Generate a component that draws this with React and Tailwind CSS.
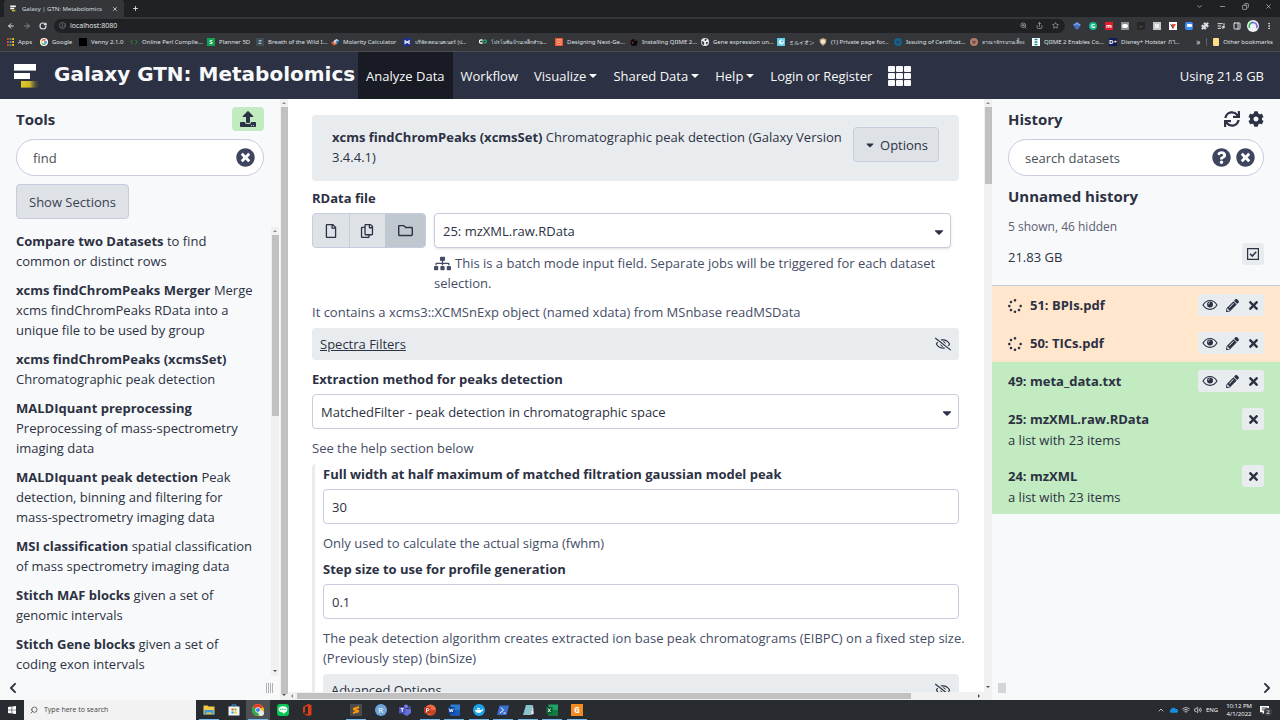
import { useState } from "react";
import { FaUpload, FaTimesCircle, FaQuestionCircle, FaCog, FaSitemap, FaPencilAlt, FaTimes, FaSpinner, FaRegFile, FaRegCopy, FaRegFolder, FaRegEyeSlash, FaCaretDown, FaChevronLeft, FaChevronRight, FaSync } from "react-icons/fa";
import { ArrowLeft, ArrowRight, RotateCw, Info, X, Plus, ZoomIn, Share, Star, ChevronDown, ChevronUp, Minus, Copy, Puzzle, ListMusic, MoreVertical, Search, PanelRight, Volume2, Wifi, Code } from "lucide-react";

const bookmarks = [
  { t: "Apps", w: "w-[33px]", k: "apps" },
  { t: "Google", w: "w-[39px]", k: "google" },
  { t: "Venny 2.1.0", w: "w-[51px]", k: "black" },
  { t: "Online Perl Compile...", w: "w-[77px]", k: "code" },
  { t: "Planner 5D", w: "w-[49px]", k: "s", c: "bg-[#12a150] text-white", l: "S" },
  { t: "Breath of the Wild I...", w: "w-[75px]", k: "s", c: "bg-[#3f4c55] text-[#9fc0cf]", l: "Z" },
  { t: "Molarity Calculator", w: "w-[72px]", k: "bird" },
  { t: "บริษัท คอนเนคเนอร์ (ป...", w: "w-[76px]", k: "s", c: "bg-[#1c2f8f] text-white", l: "⋈", small: true },
  { t: "โปรโมชั่น บ้านเหล็กสำน...", w: "w-[76px]", k: "loop", small: true },
  { t: "Designing Next-Ge...", w: "w-[75px]", k: "box" },
  { t: "Installing QIIME 2...", w: "w-[71px]", k: "dark" },
  { t: "Gene expression un...", w: "w-[76px]", k: "globe" },
  { t: "ミルイオン", w: "w-[42px]", k: "drop", small: true },
  { t: "(1) Private page for...", w: "w-[75px]", k: "face" },
  { t: "Issuing of Certificat...", w: "w-[76px]", k: "dot", c: "bg-[#12618f]" },
  { t: "อาณาจักรนานเลี้ยง", w: "w-[62px]", k: "dot", c: "bg-[#b77a67]", small: true },
  { t: "QIIME 2 Enables Co...", w: "w-[77px]", k: "bars" },
  { t: "Disney+ Hotstar ภา...", w: "w-[80px]", k: "s", c: "bg-[#101a56] text-white", l: "D+" },
];

function GoogleG() {
  return (
    <svg viewBox="0 0 16 16" className="size-2 shrink-0">
      <circle cx="8" cy="8" r="8" fill="#fff" />
      <g fill="none" strokeWidth="2.6">
        <path d="M4.4 5.2A4.6 4.6 0 0 1 11.2 4.8" stroke="#ea4335" />
        <path d="M4.4 5.2a4.6 4.6 0 0 0 0 5.6" stroke="#fbbc05" />
        <path d="M4.4 10.8a4.6 4.6 0 0 0 6.6.6" stroke="#34a853" />
        <path d="M11 11.4A4.6 4.6 0 0 0 12.6 8H8" stroke="#4285f4" />
      </g>
    </svg>
  );
}

function Favicon({ b }) {
  switch (b.k) {
    case "apps":
      return (
        <svg viewBox="0 0 7 8" className="h-2 w-[7px] shrink-0">
          {["#ea4335", "#34a853", "#fbbc05"].map((c, i) =>
            [0, 3, 6].map((y) => <rect key={c + y} x={i * 2.6} y={y} width="1.8" height="2" fill={y === 3 && i === 1 ? "#4285f4" : c} />)
          )}
        </svg>
      );
    case "google":
      return <GoogleG />;
    case "black":
      return <span className="size-2 shrink-0 bg-black" />;
    case "code":
      return <Code className="size-2 shrink-0 text-[#2c8a3c]" strokeWidth={3} />;
    case "bird":
      return (
        <svg viewBox="0 0 16 16" className="size-2 shrink-0">
          <path d="M0 8l7-1 4 6-6 2z" fill="#e8642c" />
          <path d="M5 6l6-4 5 3-5 7-4-2z" fill="#d8e6f3" />
          <path d="M9 7l6-3-2 6-3 1z" fill="#2b78c5" />
        </svg>
      );
    case "loop":
      return (
        <svg viewBox="0 0 16 10" className="h-[5px] w-2 shrink-0" fill="none" strokeWidth="2.6">
          <path d="M7 3A3.4 3.4 0 1 0 7 7" stroke="#fff" />
          <path d="M7 7l3-4a3 3 0 1 1 0 4" stroke="#26a269" />
        </svg>
      );
    case "box":
      return (
        <svg viewBox="0 0 8 8" className="size-2 shrink-0">
          <rect width="8" height="8" fill="#f1562b" />
          <path d="M2 1.500h4v5H2zM3 3h2M3 4.500h2" fill="none" stroke="#f7c9ba" strokeWidth=".7" />
        </svg>
      );
    case "dark":
      return (
        <svg viewBox="0 0 16 16" className="size-2 shrink-0">
          <circle cx="8" cy="9" r="7" fill="#0b0b0b" />
          <path d="M3 7l5 2-3 3zM9 2l4 2-4 2z" fill="#a92a31" />
        </svg>
      );
    case "globe":
      return (
        <svg viewBox="0 0 16 16" className="size-2 shrink-0">
          <circle cx="8" cy="8" r="8" fill="#e8eaed" />
          <path d="M1.500 6l4 1.500 1 3-1 4A8 8 0 0 1 1.500 6zM8 1l4 1.500L9.500 6 7 5zM10 8l4.500.5L12 13l-2-1.500z" fill="#3c4043" />
        </svg>
      );
    case "drop":
      return (
        <svg viewBox="0 0 8 8" className="size-2 shrink-0">
          <rect width="8" height="8" fill="#5ecbe8" />
          <circle cx="4.300" cy="4" r="2.500" fill="#e9f9fd" />
          <circle cx="5" cy="3.500" r="1" fill="#46b7dd" />
        </svg>
      );
    case "face":
      return (
        <svg viewBox="0 0 8 8" className="size-2 shrink-0">
          <path d="M.5 1.500L4 0l3.500 1.500L7 5 4 8 1 5z" fill="#c9a27e" />
          <circle cx="4" cy="3.600" r="2.200" fill="#f3e7d6" />
        </svg>
      );
    case "bars":
      return (
        <svg viewBox="0 0 8 8" className="size-2 shrink-0">
          <rect width="8" height="8" fill="#fff" />
          <path d="M2.500 1.500h3M2.500 4h3M2.500 6.500h3" stroke="#1490a5" strokeWidth="1.600" />
        </svg>
      );
    case "dot":
      return (
        <span className={"flex size-2 shrink-0 items-center justify-center rounded-full " + b.c}>
          <svg viewBox="0 0 8 8" className="size-[6px]" fill="none" stroke="#2f3a44"><path d="M1.500 2.500L4 6l2.500-3.500M4 2v4" /></svg>
        </span>
      );
    default:
      return <span aria-hidden="true" className={"flex size-2 shrink-0 items-center justify-center text-[6px] leading-none font-bold " + b.c}>{b.l}</span>;
  }
}

function GalaxyMark({ className }) {
  return (
    <svg viewBox="0 0 28 24" className={className}>
      <defs>
        <linearGradient id="gold" x1="0" x2="1">
          <stop offset="0" stopColor="#e3cc21" />
          <stop offset=".45" stopColor="#c9b52a" />
          <stop offset="1" stopColor="#2c3143" stopOpacity="0" />
        </linearGradient>
      </defs>
      <rect x="1" y="0" width="22" height="6.6" fill="#fff" />
      <rect x="1" y="9" width="16" height="6" fill="#fff" />
      <rect x="8" y="17" width="20" height="6.6" fill="url(#gold)" />
    </svg>
  );
}

function Browser() {
  return (
    <div className="shrink-0 text-[6px] leading-[8px] text-[#dfe1e5]">
      <div className="flex h-[17px] items-end bg-[#202124]">
        <div className="ml-1 flex h-[17px] w-[120px] items-center gap-[5px] rounded-t-[3px] bg-[#35363a] pr-1.5 pl-1.5">
          <GalaxyMark className="size-[7px]" />
          <span className="flex-1">Galaxy | GTN: Metabolomics</span>
          <button aria-label="Close tab"><X className="size-[6px]" strokeWidth={3} /></button>
        </div>
        <button aria-label="New tab" className="mb-[5px] ml-2"><Plus className="size-[7px]" strokeWidth={3} /></button>
        <div className="mb-[7px] ml-auto flex items-center gap-4 pr-2">
          <button aria-label="Search tabs"><ChevronDown className="size-[7px]" /></button>
          <button aria-label="Minimize"><Minus className="size-[7px]" /></button>
          <button aria-label="Restore"><Copy className="size-[7px] -scale-x-100" /></button>
          <button aria-label="Close"><X className="size-[7px]" /></button>
        </div>
      </div>
      <div className="flex h-[17px] items-center bg-[#35363a] pr-[7px] pl-[7px]">
        <div className="flex w-[47px] items-center gap-2">
          <button aria-label="Back"><ArrowLeft className="size-2" strokeWidth={3} /></button>
          <button aria-label="Forward"><ArrowRight className="size-2 text-[#85878a]" strokeWidth={3} /></button>
          <button aria-label="Reload"><RotateCw className="size-2" strokeWidth={3.5} /></button>
        </div>
        <div className="flex h-[14px] flex-1 items-center gap-1 rounded-full bg-[#202124] pr-1.5 pl-[5px]">
          <Info className="size-[7px] text-[#9aa0a6]" />
          <input aria-label="Address" defaultValue="localhost:8080" className="w-0 flex-1 bg-transparent text-[7px] text-[#e8eaed] outline-none" />
          <div className="flex gap-[9px] text-[#c4c7cb]">
            <ZoomIn className="size-[7px]" /><Share className="size-[7px]" /><Star className="size-[7px]" />
          </div>
        </div>
        <div className="flex items-center gap-2 pl-2">
          <svg viewBox="0 0 8 8" className="size-2"><path d="M4 0l4 3-4 3-4-3z" fill="#6f9fee" /><circle cx="4" cy="5" r="2.4" fill="#3e70c9" /></svg>
          <span aria-hidden="true" className="flex size-2 items-center justify-center rounded-full bg-[#18b78b] font-bold text-white">G</span>
          <span aria-hidden="true" className="flex size-2 items-center justify-center bg-[#e11b2b] font-bold text-white">m</span>
          <span className="flex size-2 items-center justify-center bg-[#8f8f8f]"><span className="h-1 w-1.5 rounded-full bg-white" /></span>
          <span aria-hidden="true" className="flex size-2 items-center justify-center bg-[#262626] text-[#b98a60]">›-</span>
          <span className="flex size-2 items-center justify-center bg-[#c7c7c7]"><span className="size-1 bg-[#eeeeee]" /></span>
          <svg viewBox="0 0 8 8" className="size-2"><path d="M0 0h8v8H0z" fill="#fff" /><path d="M1 2l3 5 1-3z" fill="#243a63" /><path d="M3 2h4L4 7z" fill="#f0502c" /></svg>
          <span className="flex size-2 items-center justify-center rounded-[2px] bg-[#3d8bf4]"><span className="h-[3px] w-[5px] rounded-[1px] bg-white" /></span>
          <Puzzle className="size-2" fill="currentColor" />
          <ListMusic className="size-2" strokeWidth={3} />
          <PanelRight className="size-2" strokeWidth={3} />
          <svg viewBox="0 0 12 12" className="-mx-0.5 size-3"><circle cx="6" cy="6" r="6" fill="#eef2f7" /><path d="M2.500 8A4 4 0 0 1 6 2.400" stroke="#35b35a" strokeWidth="1.600" fill="none" /><path d="M5 2.600A4 4 0 0 1 9.700 8" stroke="#7a62ea" strokeWidth="1.600" fill="none" /></svg>
          <button aria-label="Browser menu"><MoreVertical className="size-2" strokeWidth={3} /></button>
        </div>
      </div>
      <nav aria-label="Bookmarks" className="flex h-[18px] items-center border-b border-[#4a4c50] bg-[#35363a] pr-[7px] pb-0.5 pl-[7px] font-['Noto_Sans','Noto_Sans_CJK_JP',sans-serif]">
        {bookmarks.map((b) => (
          <a key={b.t} href="#" className={"flex shrink-0 items-center gap-1 whitespace-nowrap " + b.w}>
            <Favicon b={b} />
            <span className={b.small ? "text-[5px]" : ""}>{b.t}</span>
          </a>
        ))}
        <span className="ml-auto border-r border-[#5f6368] pr-1.5 text-[8px]">»</span>
        <a href="#" className="flex items-center gap-1 pl-1.5 whitespace-nowrap">
          <span className="h-2 w-1.5 rounded-[1px] bg-[#fce086]" />
          Other bookmarks
        </a>
      </nav>
    </div>
  );
}

function Caret() {
  return <span className="border-x-4 border-t-4 border-x-transparent border-t-current" />;
}

function Masthead() {
  return (
    <header className="flex h-[47px] shrink-0 items-stretch bg-[#2c3143] text-[13px] text-[#f8f9fa]">
      <a href="#" className="flex w-[358px] items-center pl-[13px]">
        <GalaxyMark className="h-6 w-7" />
        <span className="pb-1 pl-[13px] font-['DejaVu_Sans',Verdana,sans-serif] text-[20px] font-bold whitespace-nowrap">Galaxy GTN: Metabolomics</span>
      </a>
      <nav className="flex items-stretch whitespace-nowrap">
        <a href="#" className="flex items-center bg-[#181b24] px-2">Analyze Data</a>
        <a href="#" className="flex items-center px-2">Workflow</a>
        <button className="flex items-center gap-[3px] px-2">Visualize <Caret /></button>
        <button className="flex items-center gap-[3px] px-2">Shared Data <Caret /></button>
        <button className="flex items-center gap-[3px] px-2">Help <Caret /></button>
        <a href="#" className="flex items-center px-2">Login or Register</a>
        <button aria-label="Applications" className="grid grid-cols-3 place-content-center gap-px px-2">
          {Array.from({ length: 9 }, (_, i) => <span key={i} className="h-[6px] w-[7px] rounded-[1px] bg-[#f8f9fa]" />)}
        </button>
      </nav>
      <span className="ml-auto flex items-center pr-4">Using 21.8 GB</span>
    </header>
  );
}

function VScroll({ children }) {
  return (
    <div aria-hidden="true" className="flex w-2 shrink-0 flex-col items-center bg-[#f1f1f1]">
      <span className="my-[3px] border-x-2 border-b-2 border-x-transparent border-b-[#8b8b8b]" />
      {children}
      <span className="mt-auto mb-[3px] border-x-2 border-t-2 border-x-transparent border-t-[#505050] pt-[1px]" />
    </div>
  );
}

const tools = [
  ["Compare two Datasets", "to find common or distinct rows"],
  ["xcms findChromPeaks Merger", "Merge xcms findChromPeaks RData into a unique file to be used by group"],
  ["xcms findChromPeaks (xcmsSet)", "Chromatographic peak detection"],
  ["MALDIquant preprocessing", "Preprocessing of mass-spectrometry imaging data"],
  ["MALDIquant peak detection", "Peak detection, binning and filtering for mass-spectrometry imaging data"],
  ["MSI classification", "spatial classification of mass spectrometry imaging data"],
  ["Stitch MAF blocks", "given a set of genomic intervals"],
  ["Stitch Gene blocks", "given a set of coding exon intervals"],
];

function ToolPanel() {
  const [q, setQ] = useState("find");
  return (
    <aside className="flex w-[280px] shrink-0 flex-col bg-[#f8f9fa]">
      <div className="flex h-[40px] items-center justify-between pr-4 pl-4">
        <h2 className="text-[15px] font-bold">Tools</h2>
        <button aria-label="Upload data" className="flex h-6 w-8 items-center justify-center rounded bg-[#c3ebc1]"><FaUpload className="size-4" /></button>
      </div>
      <div className="mx-4 flex h-[37px] items-center rounded-full border border-[#c8cbdd] bg-white pr-2 pl-4">
        <input aria-label="search tools" value={q} onChange={(e) => setQ(e.target.value)} className="w-0 flex-1 bg-transparent text-[#495057] outline-none" />
        <button aria-label="Clear search" onClick={() => setQ("")}><FaTimesCircle className="size-[19px] text-[#3e455e]" /></button>
      </div>
      <button className="mt-2 ml-4 h-[35px] self-start rounded border border-[#c8cbdd] bg-[#dee2e6] px-3 text-[#3a4152]">Show Sections</button>
      <div className="mt-2 flex min-h-0 flex-1">
        <ul className="flex-1 overflow-hidden pt-1 pl-4">
          {tools.map(([n, d]) => (
            <li key={n} className="mb-[9px] w-[240px]"><a href="#"><b className="text-[#2c3143]">{n}</b> {d}</a></li>
          ))}
        </ul>
        <VScroll><span className="h-[181px] w-[7px] bg-[#c1c1c1]" /></VScroll>
        <span className="w-px" />
      </div>
      <footer className="flex h-6 items-center justify-between pr-[7px] pl-[7px]">
        <button aria-label="Collapse tools"><FaChevronLeft className="size-3" /></button>
        <span className="flex gap-px">{[0, 1, 2, 3].map((i) => <span key={i} className="h-[10px] w-px bg-[#adb0b5]" />)}</span>
      </footer>
    </aside>
  );
}

function Section({ title }) {
  return (
    <div className="flex h-8 items-center justify-between rounded bg-[#e9ecef] px-2">
      <a href="#" className="underline">{title}</a>
      <button aria-label={"Toggle " + title}><FaRegEyeSlash className="size-4" /></button>
    </div>
  );
}

function Field({ id, label, value, help }) {
  return (
    <div>
      <label htmlFor={id} className="block font-bold text-[#2c3143]">{label}</label>
      <input id={id} defaultValue={value} className="mt-[5px] block h-[35px] w-full rounded border border-[#c8cbdd] bg-white px-2 outline-none" />
      <p className="mt-[9px] -mr-4 text-[#454d66]">{help}</p>
    </div>
  );
}

function Center() {
  return (
    <main className="flex min-w-0 flex-1 bg-white">
      <VScroll><span className="w-[7px] flex-1 bg-[#c1c1c1]" /></VScroll>
      <div className="flex min-w-0 flex-1 flex-col">
        <div className="flex min-h-0 flex-1">
          <div className="min-w-0 flex-1 overflow-hidden pt-4 pr-[25px] pl-6">
            <div className="flex h-[66px] items-start gap-1 rounded bg-[#e9ecef] pt-3 pr-5 pl-5">
              <h1 className="flex-1"><b className="text-[#2c3143]">xcms findChromPeaks (xcmsSet)</b> Chromatographic peak detection (Galaxy Version 3.4.4.1)</h1>
              <button className="flex h-[35px] items-center gap-1 rounded border border-[#c8cbdd] bg-[#dee2e6] px-2.5"><FaCaretDown className="size-3" /> Options</button>
            </div>
            <label htmlFor="rdata" className="mt-[7px] block font-bold text-[#2c3143]">RData file</label>
            <div className="mt-[5px] flex pr-2">
              <div className="flex h-[35px] w-[114px] shrink-0 overflow-hidden rounded border border-[#c8cbdd] bg-[#dee2e6]">
                <button aria-label="Single dataset" className="flex flex-1 items-center justify-center border-r border-[#c8cbdd]"><FaRegFile className="size-[14px]" /></button>
                <button aria-label="Multiple datasets" className="flex flex-1 items-center justify-center"><FaRegCopy className="size-[14px]" /></button>
                <button aria-label="Dataset collection" className="flex w-10 items-center justify-center bg-[#c0c8cf]"><FaRegFolder className="size-[15px]" /></button>
              </div>
              <div className="ml-2 flex-1">
                <div className="relative">
                  <select id="rdata" className="h-[35px] w-full appearance-none rounded border border-[#c8cbdd] bg-white px-2 shadow">
                    <option>25: mzXML.raw.RData</option>
                  </select>
                  <FaCaretDown className="pointer-events-none absolute top-3 right-[5px] size-[14px]" />
                </div>
                <p className="mt-[5px] text-[#454d66]"><FaSitemap className="mr-1 inline-block size-[17px] align-text-bottom" />This is a batch mode input field. Separate jobs will be triggered for each dataset selection.</p>
              </div>
            </div>
            <p className="mt-[9px] mb-[6px] text-[#454d66]">It contains a xcms3::XCMSnExp object (named xdata) from MSnbase readMSData</p>
            <Section title="Spectra Filters" />
            <label htmlFor="method" className="mt-[9px] block font-bold text-[#2c3143]">Extraction method for peaks detection</label>
            <div className="relative mt-[5px]">
              <select id="method" className="h-[35px] w-full appearance-none rounded border border-[#c8cbdd] bg-white px-2">
                <option>MatchedFilter - peak detection in chromatographic space</option>
              </select>
              <FaCaretDown className="pointer-events-none absolute top-3 right-[5px] size-[14px]" />
            </div>
            <p className="mt-[9px] text-[#454d66]">See the help section below</p>
            <div className="mt-[6px] flex flex-col gap-[6px] rounded-tl border-l-[3px] border-[#e9ecef] pl-2">
              <Field id="fwhm" label="Full width at half maximum of matched filtration gaussian model peak" value="30" help="Only used to calculate the actual sigma (fwhm)" />
              <Field id="step" label="Step size to use for profile generation" value="0.1" help="The peak detection algorithm creates extracted ion base peak chromatograms (EIBPC) on a fixed step size. (Previously step) (binSize)" />
              <Section title="Advanced Options" />
            </div>
          </div>
          <VScroll><span className="h-[77px] w-[7px] bg-[#c1c1c1]" /></VScroll>
        </div>
        <div aria-hidden="true" className="flex h-2 shrink-0 items-center bg-[#f1f1f1]">
          <span className="mr-[4px] ml-[3px] border-y-2 border-r-2 border-y-transparent border-r-[#8b8b8b]" />
          <span className="h-1.5 w-[614px] bg-[#c1c1c1]" />
          <span className="mr-3 ml-auto border-y-2 border-l-2 border-y-transparent border-l-[#505050]" />
        </div>
      </div>
    </main>
  );
}

function Eye() {
  return (
    <svg viewBox="0 0 16 12" className="h-3 w-4">
      <path d="M1 6C4.500 0 11.500 0 15 6 11.500 11.800 4.500 11.800 1 6z" fill="none" stroke="currentColor" strokeWidth="1.100" />
      <circle cx="8" cy="5.600" r="3" fill="currentColor" />
      <path d="M6.300 5.400A1.800 1.800 0 0 1 8 3.800" fill="none" stroke="#e9ecef" strokeWidth=".8" />
    </svg>
  );
}

function Item({ name, sub, state, full }) {
  return (
    <li className={"flex items-start px-4 pt-2 " + (sub ? "h-[57px] " : "h-[38px] ") + (state === "run" ? "bg-[#ffe6cd]" : "bg-[#c3ebc1]")}>
      {state === "run" && <FaSpinner className="mt-[5px] mr-2 size-[14px]" />}
      <div className="flex-1">
        <a href="#" className="block leading-[22px] font-bold text-[#2c3143]">{name}</a>
        {sub && <p>{sub}</p>}
      </div>
      <div className="flex h-[22px] items-center rounded-[3px] bg-[#e9ecef]">
        {full && <button aria-label="View data" className="flex w-6 justify-center"><Eye /></button>}
        {full && <button aria-label="Edit attributes" className="flex w-5 justify-center"><FaPencilAlt className="size-[13px]" /></button>}
        <button aria-label="Delete" className="flex w-[22px] justify-center"><FaTimes className="size-[13px]" /></button>
      </div>
    </li>
  );
}

function History() {
  return (
    <aside className="flex w-[288px] shrink-0 flex-col bg-[#f8f9fa]">
      <div className="flex h-[40px] items-center px-4">
        <h2 className="flex-1 text-[15px] font-bold">History</h2>
        <button aria-label="Refresh history"><FaSync className="size-4" /></button>
        <button aria-label="History options" className="ml-2"><FaCog className="size-4" /></button>
      </div>
      <div className="mx-4 flex h-[37px] items-center gap-[5px] rounded-full border border-[#c8cbdd] bg-white pr-2 pl-4 text-[#3e455e]">
        <input aria-label="search datasets" placeholder="search datasets" className="w-0 flex-1 bg-transparent outline-none placeholder:text-[#495057]" />
        <button aria-label="Search help"><FaQuestionCircle className="size-[19px]" /></button>
        <button aria-label="Clear"><FaTimesCircle className="size-[19px]" /></button>
      </div>
      <h3 className="mt-[10px] px-4 text-[15px] font-bold">Unnamed history</h3>
      <p className="mt-[11px] px-4 text-[12px] text-[#5a6070]">5 shown, 46 hidden</p>
      <div className="mt-[6px] flex h-[43px] items-start justify-between border-b border-[#c8cbdd] px-4">
        <span className="pt-1">21.83 GB</span>
        <button aria-label="Select datasets" className="flex size-[22px] items-center justify-center rounded-[3px] bg-[#e9ecef]">
          <svg viewBox="0 0 12 12" className="size-3" fill="none" stroke="currentColor" strokeWidth="1.200"><path d="M.6.600h10.800v10.800H.6z" /><path d="M3 5.800l2.300 2.300L9.200 3.800" strokeWidth="1.500" /></svg>
        </button>
      </div>
      <ul>
        <Item name="51: BPIs.pdf" state="run" full />
        <Item name="50: TICs.pdf" state="run" full />
        <Item name="49: meta_data.txt" full />
        <Item name="25: mzXML.raw.RData" sub="a list with 23 items" />
        <Item name="24: mzXML" sub="a list with 23 items" />
      </ul>
      <footer className="mt-auto flex h-6 items-center justify-between pr-[7px] pl-1.5">
        <span className="h-[10px] w-2 bg-[#d4d5d7]" />
        <button aria-label="Collapse history"><FaChevronRight className="size-3" /></button>
      </footer>
    </aside>
  );
}

const apps = [
  ["File Explorer", true, <svg viewBox="0 0 12 12" className="size-3"><path d="M.5 1.500h4l1 1h6v8H.5z" fill="#f7c948" /><path d="M1.500 6h9v5h-2V8.500h-5V11h-2z" fill="#3a9be0" /></svg>],
  ["Microsoft Store", false, <svg viewBox="0 0 12 12" className="size-3"><path d="M4 3V1h4v2" stroke="#39a0e0" fill="none" /><path d="M.5 2.500h11v9H.5z" fill="#f2f5f8" /><path d="M3.500 4.500h2v2h-2z" fill="#f25022" /><path d="M6.500 4.500h2v2h-2z" fill="#7fba00" /><path d="M3.500 7.500h2v2h-2z" fill="#00a4ef" /><path d="M6.500 7.500h2v2h-2z" fill="#ffb900" /></svg>],
  ["Chrome", true, <svg viewBox="0 0 12 12" className="size-3"><circle cx="6" cy="6" r="6" fill="#fbc116" /><path d="M6 6L.8 3A6 6 0 0 1 11.200 3z" fill="#e33b2e" /><path d="M.8 3A6 6 0 0 0 6 12l2.500-4.500L6 6z" fill="#2da94f" /><circle cx="6" cy="6" r="2.700" fill="#fff" /><circle cx="6" cy="6" r="2.100" fill="#4285f4" /><circle cx="9.200" cy="9.200" r="2.700" fill="#e9edf2" /></svg>],
  ["LINE", false, <svg viewBox="0 0 12 12" className="size-3"><rect width="12" height="12" rx="3" fill="#06c755" /><path d="M6 2.200c5.500 0 5.500 5 1.800 6.600L6 10V8.500c-6 0-6-6.300 0-6.300z" fill="#fff" /><path d="M3 5.300h6" stroke="#06c755" strokeDasharray="1.200 .5" /></svg>],
  ["Office", false, <svg viewBox="0 0 12 12" className="size-3"><path d="M2 3l5-3 3.500 1v10L7 12 2 9.500l5 .7V2L4 3v5L2 9z" fill="#dc3e15" /></svg>],
  null,
  ["Sublime Text", true, <svg viewBox="0 0 12 12" className="size-3"><rect width="12" height="12" rx="1" fill="#4b4b4b" /><path d="M3 4l6-2v2.200L6 5.200l3 1v2L3 10V8l3-1-3-1z" fill="#ff9800" /></svg>],
  ["RStudio", false, <span aria-hidden="true" className="flex size-3 items-center justify-center rounded-full bg-[#6fa5d9] text-[8px] leading-none text-white">R</span>],
  ["Teams", false, <svg viewBox="0 0 12 12" className="size-3"><circle cx="7" cy="2.500" r="2" fill="#7b83eb" /><circle cx="10.500" cy="3.500" r="1.300" fill="#5059c9" /><path d="M4 5h8v4l-4 3-4-2z" fill="#6670d8" /><path d="M0 3h6.500v6.500H0z" fill="#4b53bc" /><path d="M1.700 4.700h3M3.200 4.700V8" stroke="#fff" /></svg>],
  ["PowerPoint", true, <svg viewBox="0 0 12 12" className="size-3"><circle cx="6.500" cy="6" r="5.500" fill="#ed6c47" /><path d="M6.500 6H12a5.500 5.500 0 0 1-5.500 5.500z" fill="#c9431f" /><rect y="3" width="6.500" height="6.500" fill="#b7391a" /><path d="M2.500 8.500v-4h1.300a1.100 1.100 0 0 1 0 2.200H2.500" stroke="#fff" fill="none" strokeWidth=".9" /></svg>],
  ["Word", true, <svg viewBox="0 0 12 12" className="size-3"><rect x="2.500" y=".5" width="9.500" height="11" fill="#2b7cd3" /><path d="M2.500 6H12v5.500H2.500z" fill="#185abd" /><rect y="3" width="6.500" height="6.500" fill="#103f91" /><path d="M1.200 4.500l1 3.500 1-3 1 3 1-3.500" stroke="#fff" fill="none" strokeWidth=".8" /></svg>],
  ["Docker", true, <svg viewBox="0 0 12 12" className="size-3"><circle cx="6" cy="6" r="6" fill="#1ba4ee" /><path d="M2 6h6.500l1-1.200.8 1L8.500 7.500C7 10 2.500 9.500 2 6zM4 4h3v1.500H4z" fill="#fff" /></svg>],
  ["PowerShell", true, <svg viewBox="0 0 12 12" className="size-3"><path d="M2.500 1.500H12l-2.300 9.500H0z" fill="#3b6fd0" /><path d="M4 3.500l2.500 2.700L3 9M6.500 9h2" stroke="#fff" fill="none" /></svg>],
  ["Notepad", true, <svg viewBox="0 0 12 12" className="size-3"><path d="M4 1h7L8 11H1z" fill="#8ac3cf" /><path d="M11 1l.8 9L8 11z" fill="#d9e4e6" /></svg>],
  ["Excel", true, <svg viewBox="0 0 12 12" className="size-3"><rect x="2.500" y=".5" width="9.500" height="11" fill="#21a366" /><path d="M2.500 6H12v5.500H2.500z" fill="#107c41" /><rect y="3" width="6.500" height="6.500" fill="#0b5c30" /><path d="M2 4.500L4.600 8M4.600 4.500L2 8" stroke="#fff" strokeWidth=".9" /></svg>],
  ["Foxit", true, <span aria-hidden="true" className="flex size-3 items-center justify-center bg-[#f68b1f] text-[8px] leading-none font-bold text-white">G</span>],
];

function Taskbar() {
  return (
    <footer className="flex h-5 shrink-0 items-stretch bg-[#282b30] text-[6px] text-white">
      <button aria-label="Start" className="flex w-6 items-center justify-center">
        <svg viewBox="0 0 8 8" className="size-2" fill="currentColor"><path d="M0 1l3.600-.5v3.200H0zM4.200.400L8 0v3.700H4.200zM0 4.300h3.600v3.200L0 7zM4.200 4.300H8V8l-3.800-.5z" /></svg>
      </button>
      <label className="flex w-[172px] items-center gap-1.5 bg-[#f2f2f2] pl-1.5 text-[#333]">
        <Search className="size-2 -scale-x-100" />
        <input aria-label="Type here to search" placeholder="Type here to search" className="w-0 flex-1 bg-transparent text-[7px] outline-none placeholder:text-[#444]" />
      </label>
      <div className="ml-px flex w-[392px] justify-between">
        {apps.map((a, i) =>
          a ? (
            <button key={a[0]} aria-label={a[0]} className={"flex items-center justify-center px-0.5 " + (a[0] === "Chrome" ? "bg-[#4d5054]" : "")}>
              <span className={"flex h-full w-5 items-center justify-center border-b pt-px " + (a[1] ? "border-[#76b9ed]" : "border-transparent")}>{a[2]}</span>
            </button>
          ) : (
            <span key={i} className="w-6" />
          )
        )}
      </div>
      <div className="ml-auto flex items-center gap-1 pr-1">
        <ChevronUp className="size-2" />
        <svg viewBox="0 0 10 8" className="h-2 w-[9px]"><path d="M2 7a2 2 0 0 1 0-3.500A3 3 0 0 1 7.500 3 2 2 0 0 1 8.500 7z" fill="#1490df" /></svg>
        <Wifi className="size-2" />
        <Volume2 className="size-2" />
        <span>ENG</span>
        <span className="pl-1 text-center leading-[8px]">10:12 PM<br />4/1/2022</span>
        <span className="relative ml-1 flex w-4 items-center">
          <svg viewBox="0 0 10 10" className="size-[9px]"><path d="M0 0h10v7H5L3 9.500V7H0z" fill="#fff" /><path d="M2 2.200h6M2 4.400h6" stroke="#282b30" /></svg>
          <span className="absolute top-0.5 left-1 flex size-2 items-center justify-center rounded-full bg-[#3c3f44] leading-none">2</span>
        </span>
      </div>
    </footer>
  );
}

export default function App() {
  return (
    <div className="flex h-screen flex-col overflow-hidden font-['Open_Sans','Segoe_UI',sans-serif] text-[13px] leading-[20px] text-[#343a49]">
      <Browser />
      <Masthead />
      <div className="flex min-h-0 flex-1 text-[#2c3143]">
        <ToolPanel />
        <Center />
        <History />
      </div>
      <Taskbar />
    </div>
  );
}
